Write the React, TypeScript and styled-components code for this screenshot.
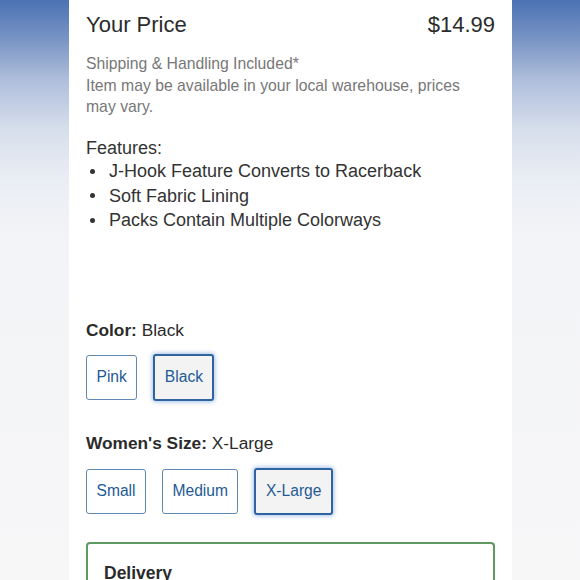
import React from 'react'
import styled, { createGlobalStyle } from 'styled-components'

const GlobalStyle = createGlobalStyle`
  html, body {
    margin: 0;
    padding: 0;
    background: #f5f6f8;
  }
  body {
    font-family: "Liberation Sans", Arial, Helvetica, sans-serif;
  }
`

const Page = styled.div`
  display: grid;
  grid-template-columns: 69px 443px 68px;
  width: 580px;
  height: 580px;
  overflow: hidden;
`

const Side = styled.div`
  background: linear-gradient(
    to bottom,
    #4a72b3 0px,
    #7a95c5 40px,
    #afbedb 80px,
    #d7dfec 130px,
    #eaeef4 180px,
    #f3f4f7 240px,
    #f7f7f8 580px
  );
`

const Main = styled.main`
  background: #fff;
  padding: 11px 17px 0 17px;
  color: #333;
`

const PriceRow = styled.div`
  display: flex;
  justify-content: space-between;
  align-items: center;
  font-size: 22px;
  line-height: 28px;
  color: #2b2b2b;
`

const Note = styled.p`
  margin: 14px 0 0;
  padding-right: 30px;
  font-size: 15.75px;
  line-height: 21.5px;
  color: #777;
`

const Features = styled.div`
  margin-top: 18px;
  font-size: 18px;
  line-height: 24.5px;
  color: #333;
`

const FeatureList = styled.ul`
  list-style: none;
  margin: -1px 0 0;
  padding: 0;
`

const FeatureItem = styled.li`
  display: flex;
  align-items: center;

  &::before {
    content: '';
    width: 5px;
    height: 5px;
    border-radius: 50%;
    background: #333;
    margin: 0 14px 0 4px;
  }
`

const OptionLabel = styled.div<{ $gap: number }>`
  margin-top: ${p => p.$gap}px;
  font-size: 17.3px;
  line-height: 24px;
  color: #2b2b2b;

  b {
    font-weight: 700;
  }
`

const OptionRow = styled.div<{ $gap: number }>`
  display: flex;
  align-items: center;
  gap: 16px;
  margin-top: ${p => p.$gap}px;
  height: 47px;
`

const OptionButton = styled.button<{ $selected?: boolean }>`
  font-family: "Liberation Sans", Arial, Helvetica, sans-serif;
  font-size: 15.6px;
  color: #235a94;
  background: ${p => (p.$selected ? '#f3f3f4' : '#fff')};
  border: ${p => (p.$selected ? '2px solid #3064a0' : '1px solid #6089b3')};
  border-radius: 3px;
  padding: 0 9.5px;
  height: ${p => (p.$selected ? 47 : 45)}px;
  box-shadow: ${p => (p.$selected ? '0 0 4px 1px rgba(60, 120, 200, 0.45)' : 'none')};
  cursor: pointer;
`

const DeliveryBox = styled.section`
  margin-top: 27px;
  border: 2px solid #5e9b62;
  border-bottom: none;
  border-radius: 4px 4px 0 0;
  padding: 19px 16px 0;
  height: 60px;
`

const DeliveryTitle = styled.h3`
  margin: 0;
  font-size: 17.5px;
  font-weight: 700;
  color: #2b2b2b;
`

const colors = ['Pink', 'Black']
const sizes = ['Small', 'Medium', 'X-Large']

const App = () => {
  const color = 'Black'
  const size = 'X-Large'

  return (
    <>
      <GlobalStyle />
      <Page>
        <Side />
        <Main>
          <PriceRow>
            <span>Your Price</span>
            <span>$14.99</span>
          </PriceRow>
          <Note>
            Shipping &amp; Handling Included*
            <br />
            Item may be available in your local warehouse, prices may vary.
          </Note>
          <Features>
            Features:
            <FeatureList>
              <FeatureItem>J-Hook Feature Converts to Racerback</FeatureItem>
              <FeatureItem>Soft Fabric Lining</FeatureItem>
              <FeatureItem>Packs Contain Multiple Colorways</FeatureItem>
            </FeatureList>
          </Features>

          <OptionLabel $gap={85}>
            <b>Color:</b> {color}
          </OptionLabel>
          <OptionRow $gap={12}>
            {colors.map(c => (
              <OptionButton key={c} $selected={c === color}>{c}</OptionButton>
            ))}
          </OptionRow>

          <OptionLabel $gap={30}>
            <b>Women's Size:</b> {size}
          </OptionLabel>
          <OptionRow $gap={13}>
            {sizes.map(s => (
              <OptionButton key={s} $selected={s === size}>{s}</OptionButton>
            ))}
          </OptionRow>

          <DeliveryBox>
            <DeliveryTitle>Delivery</DeliveryTitle>
          </DeliveryBox>
        </Main>
        <Side />
      </Page>
    </>
  )
}

export default App
